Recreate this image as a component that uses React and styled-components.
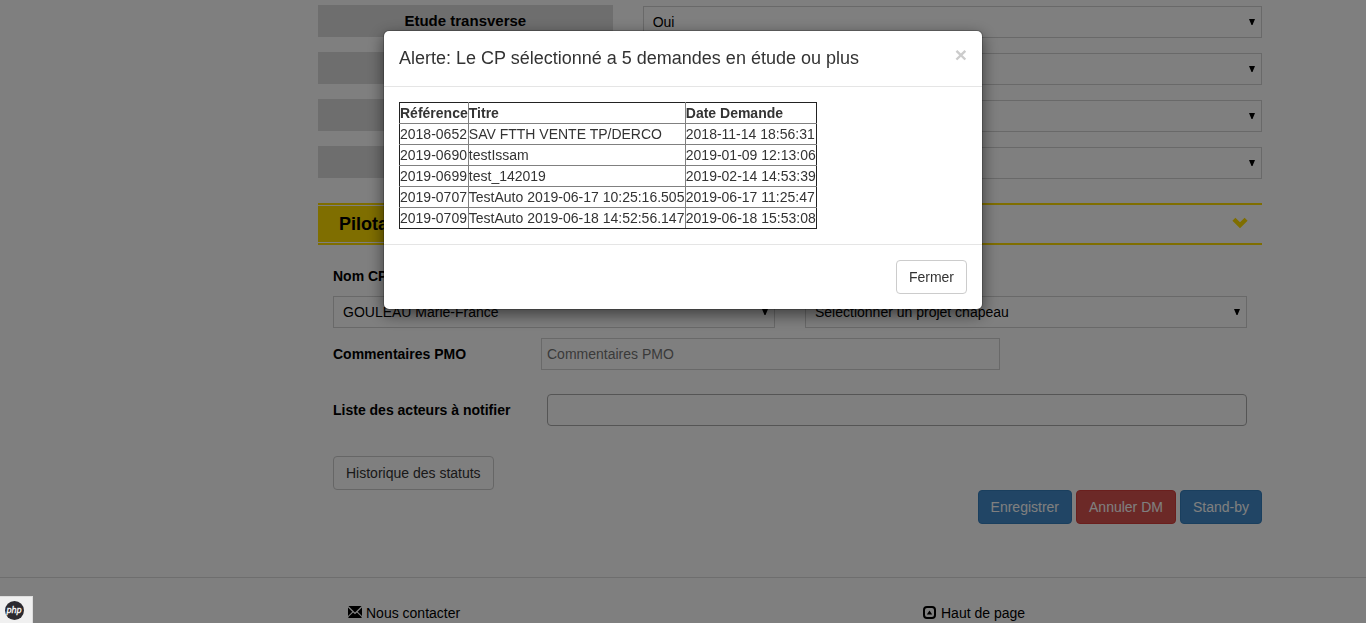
import React from "react";
import styled, { createGlobalStyle, css } from "styled-components";

const yellow = "#ffdc00";

const GlobalStyle = createGlobalStyle`
  *, *::before, *::after { box-sizing: border-box; }
  body {
    margin: 0;
    overflow: hidden;
    background: #fff;
    color: #000;
    font: 14px/20px "Liberation Sans", Arial, sans-serif;
  }
  button, input, select { font: inherit; }
`;

const Main = styled.main`
  padding: 5px 104px 0 318px;
`;

const FieldRow = styled.div`
  display: grid;
  grid-template-columns: repeat(12, 1fr);
  column-gap: 30px;
  align-items: end;
  margin-bottom: 14px;
`;

const FieldLabel = styled.label`
  grid-column: span 4;
  align-self: start;
  height: 32px;
  background: #ddd;
  font-size: 15px;
  font-weight: bold;
  line-height: 32px;
  text-align: center;
`;

const SelectBox = styled.div`
  position: relative;
  grid-column: span 8;
  margin-top: ${(p) => (p.$flush ? "0" : "1px")};

  svg {
    position: absolute;
    top: 13px;
    right: 7px;
    pointer-events: none;
  }
`;

const SelectControl = styled.select`
  display: block;
  width: 100%;
  height: 32px;
  padding: 0 24px 0 9px;
  border: 1px solid #d2d2d2;
  border-radius: 0;
  background: #fff;
  color: #000;
  appearance: none;
`;

const SectionHeader = styled.div`
  display: flex;
  justify-content: space-between;
  align-items: center;
  height: 42px;
  margin-top: 24px;
  padding: 1px 14px 1px 0;
  border: solid ${yellow};
  border-width: 2px 0;
`;

const SectionTitle = styled.h2`
  margin: 0;
  padding: 0 21px;
  background: ${yellow};
  font-size: 18px;
  line-height: 36px;
`;

const IconButton = styled.button`
  display: flex;
  padding: 0;
  border: 0;
  background: none;
  color: ${yellow};
  cursor: pointer;
`;

const SectionBody = styled.div`
  padding: 21px 15px 0;
`;

const Columns = styled.div`
  display: grid;
  grid-template-columns: 1fr 1fr;
  gap: 10px 30px;
`;

const Stack = styled.div`
  display: flex;
  flex-direction: column;
  gap: 10px;
`;

const Label = styled.label`
  font-weight: bold;
`;

const InlineField = styled.div`
  display: grid;
  grid-template-columns: ${(p) => p.$columns};
  align-items: center;
  margin-top: ${(p) => p.$top};
`;

const TextInput = styled.input`
  width: 100%;
  height: 32px;
  padding: 0 5px;
  border: 1px solid ${(p) => (p.$rounded ? "#aaa" : "#d2d2d2")};
  border-radius: ${(p) => (p.$rounded ? "4px" : "0")};
  background: #fff;

  &::placeholder { color: #757575; opacity: 1; }
`;

const tones = {
  plain: css`background: #fff; border-color: #ccc; color: #333;`,
  primary: css`background: #428bca; border-color: #357ebd; color: #fff;`,
  danger: css`background: #d9534f; border-color: #d43f3a; color: #fff;`,
};

const Button = styled.button`
  height: 34px;
  padding: 6px 12px;
  border: 1px solid;
  border-radius: 4px;
  line-height: 20px;
  cursor: pointer;
  ${(p) => tones[p.$tone || "plain"]}
`;

const HistoryBar = styled.div`
  margin-top: 30px;
`;

const Actions = styled.div`
  display: flex;
  justify-content: flex-end;
  gap: 4px;
`;

const Footer = styled.footer`
  display: grid;
  grid-template-columns: 575px 1fr;
  margin-top: 53px;
  padding: 25px 104px 0 348px;
  border-top: 1px solid #ddd;
`;

const FooterLink = styled.a`
  display: inline-flex;
  align-items: center;
  gap: 4px;
  color: #000;
  text-decoration: none;
`;

const Backdrop = styled.div`
  position: fixed;
  inset: 0;
  display: flex;
  justify-content: center;
  align-items: flex-start;
  padding-top: 30px;
  background: rgba(0, 0, 0, 0.5);
`;

const Dialog = styled.section`
  width: 600px;
  max-width: 100%;
  border: 1px solid rgba(0, 0, 0, 0.2);
  border-radius: 6px;
  background: #fff;
  background-clip: padding-box;
  box-shadow: 0 5px 15px rgba(0, 0, 0, 0.5);
  color: #333;
`;

const DialogHeader = styled.header`
  display: flex;
  justify-content: space-between;
  align-items: flex-start;
  padding: 15px;
  border-bottom: 1px solid #e5e5e5;
`;

const DialogTitle = styled.h1`
  margin: 0;
  font-size: 18px;
  font-weight: normal;
  line-height: 25px;
`;

const CloseButton = styled.button`
  padding: 0;
  border: 0;
  background: none;
  color: #ccc;
  font-size: 21px;
  font-weight: bold;
  line-height: 18px;
  cursor: pointer;
`;

const DialogBody = styled.div`
  padding: 15px;
`;

const DialogFooter = styled.footer`
  display: flex;
  justify-content: flex-end;
  padding: 15px;
  border-top: 1px solid #e5e5e5;
`;

const Table = styled.table`
  width: 418px;
  border: 1px solid #222;
  border-collapse: collapse;
  white-space: nowrap;

  th, td {
    height: 21px;
    padding: 0;
    border: 1px solid #808080;
    text-align: left;
  }

  tr > :first-child { border-left-color: #222; }
  tr > :last-child { border-right-color: #222; }
  thead th { border-top-color: #222; }
  tbody tr:last-child td { border-bottom-color: #222; }
`;

const PhpBadge = styled.button`
  position: fixed;
  left: 0;
  bottom: 0;
  display: flex;
  width: 33px;
  height: 27px;
  padding: 4px;
  border: solid #ddd;
  border-width: 1px 1px 0 0;
  background: #f0f0f0;
`;

const Arrow = () => (
  <svg width="6" height="6" viewBox="0 0 6 6" aria-hidden="true">
    <path d="M0 0h6L3.5 6h-1z" fill="#000" />
  </svg>
);

const ChevronDown = () => (
  <svg width="16" height="14" viewBox="0 0 16 14" aria-hidden="true">
    <path d="M.4 3.7 3.4.7 8 5.3 12.6.7l3 3L8 11.3z" fill="currentColor" />
  </svg>
);

const Envelope = () => (
  <svg width="14" height="14" viewBox="0 0 14 14" aria-hidden="true">
    <path d="M.4 0h13.2L7 6.4zM0 1.4 4.3 5.7 0 10zM14 1.4v8.6L9.7 5.7zM.4 12v-.9l4.7-4.6L7 8.3l1.9-1.8 4.7 4.6v.9z" />
  </svg>
);

const ExpandUp = () => (
  <svg width="14" height="14" viewBox="0 0 14 14" aria-hidden="true">
    <rect x="1" y="1" width="11" height="11" rx="3" fill="none" stroke="#000" strokeWidth="2" />
    <path d="M3.8 8.6 6.5 4.4 9.2 8.6z" />
  </svg>
);

function Select({ id, options, flush, ...rest }) {
  return (
    <SelectBox $flush={flush}>
      <SelectControl id={id} {...rest}>
        {options.map((o) => (
          <option key={o}>{o}</option>
        ))}
      </SelectControl>
      <Arrow />
    </SelectBox>
  );
}

const fields = [
  { id: "etude", label: "Etude transverse", options: ["Oui"] },
  { id: "champ2", label: "", options: [] },
  { id: "champ3", label: "", options: [] },
  { id: "champ4", label: "", options: [] },
];

const requests = [
  ["2018-0652", "SAV FTTH VENTE TP/DERCO", "2018-11-14 18:56:31"],
  ["2019-0690", "testIssam", "2019-01-09 12:13:06"],
  ["2019-0699", "test_142019", "2019-02-14 14:53:39"],
  ["2019-0707", "TestAuto 2019-06-17 10:25:16.505", "2019-06-17 11:25:47"],
  ["2019-0709", "TestAuto 2019-06-18 14:52:56.147", "2019-06-18 15:53:08"],
];

export default function App() {
  return (
    <>
      <GlobalStyle />
      <Main>
        {fields.map((f) => (
          <FieldRow key={f.id}>
            <FieldLabel htmlFor={f.id}>{f.label}</FieldLabel>
            <Select id={f.id} options={f.options} />
          </FieldRow>
        ))}

        <SectionHeader>
          <SectionTitle>Pilotage</SectionTitle>
          <IconButton type="button" aria-label="Replier">
            <ChevronDown />
          </IconButton>
        </SectionHeader>

        <SectionBody>
          <Columns>
            <Stack>
              <Label htmlFor="cp">Nom CP</Label>
              <Select id="cp" options={["GOULEAU Marie-France"]} flush />
            </Stack>
            <Stack>
              <Label htmlFor="projet">Projet chapeau</Label>
              <Select id="projet" options={["Sélectionner un projet chapeau"]} flush />
            </Stack>
          </Columns>
          <InlineField $columns="208px 1fr 247px" $top="10px">
            <Label htmlFor="pmo">Commentaires PMO</Label>
            <TextInput id="pmo" placeholder="Commentaires PMO" />
          </InlineField>
          <InlineField $columns="214px 1fr" $top="24px">
            <Label htmlFor="acteurs">Liste des acteurs à notifier</Label>
            <TextInput id="acteurs" $rounded />
          </InlineField>
          <HistoryBar>
            <Button type="button">Historique des statuts</Button>
          </HistoryBar>
        </SectionBody>

        <Actions>
          <Button type="button" $tone="primary">Enregistrer</Button>
          <Button type="button" $tone="danger">Annuler DM</Button>
          <Button type="button" $tone="primary">Stand-by</Button>
        </Actions>
      </Main>

      <Footer>
        <div>
          <FooterLink href="#contact"><Envelope />Nous contacter</FooterLink>
        </div>
        <div>
          <FooterLink href="#top"><ExpandUp />Haut de page</FooterLink>
        </div>
      </Footer>

      <Backdrop>
        <Dialog role="dialog" aria-modal="true" aria-labelledby="alert-title">
          <DialogHeader>
            <DialogTitle id="alert-title">
              Alerte: Le CP sélectionné a 5 demandes en étude ou plus
            </DialogTitle>
            <CloseButton type="button" aria-label="Fermer la fenêtre">×</CloseButton>
          </DialogHeader>
          <DialogBody>
            <Table>
              <thead>
                <tr>
                  <th>Référence</th>
                  <th>Titre</th>
                  <th>Date Demande</th>
                </tr>
              </thead>
              <tbody>
                {requests.map((r) => (
                  <tr key={r[0]}>
                    {r.map((cell) => (
                      <td key={cell}>{cell}</td>
                    ))}
                  </tr>
                ))}
              </tbody>
            </Table>
          </DialogBody>
          <DialogFooter>
            <Button type="button">Fermer</Button>
          </DialogFooter>
        </Dialog>
      </Backdrop>

      <PhpBadge type="button" aria-label="php">
        <svg width="20" height="20" viewBox="0 0 20 20">
          <circle cx="10.5" cy="9.5" r="9.5" fill="#2c2a30" />
          <text
            x="10"
            y="12"
            textAnchor="middle"
            fill="#fff"
            stroke="#fff"
            strokeWidth="0.3"
            fontFamily="DejaVu Sans, sans-serif"
            fontSize="8"
            fontStyle="italic"
          >
            php
          </text>
        </svg>
      </PhpBadge>
    </>
  );
}
